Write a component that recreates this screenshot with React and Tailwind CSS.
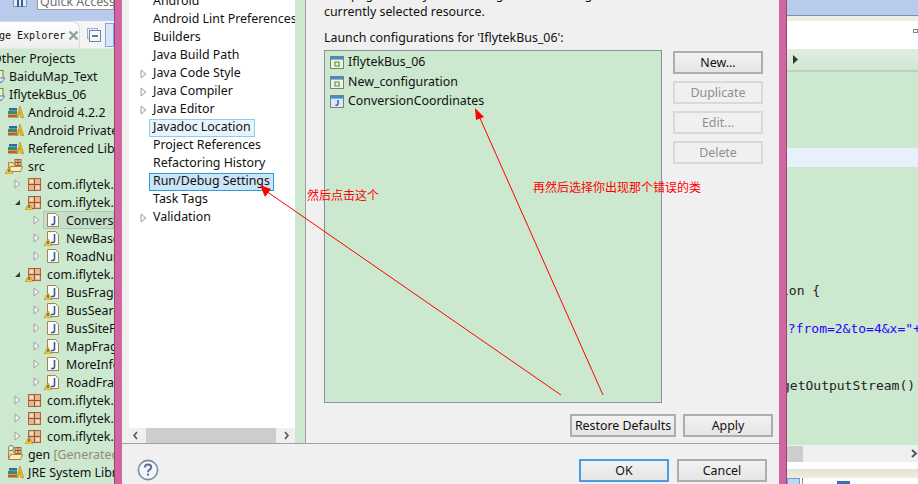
const ui = { fontFamily: '"Noto Sans", sans-serif' };

function Twisty({ open }) {
  if (open) {
    return (
      <svg width="7" height="7" viewBox="0 0 7 7" className="shrink-0">
        <path d="M6 1V6H1Z" fill="#3a3a3a" />
      </svg>
    );
  }
  return (
    <svg width="7" height="10" viewBox="0 0 7 10" className="shrink-0">
      <path d="M1 1L6 5L1 9Z" fill="#f4f4f4" stroke="#a0a0a0" />
    </svg>
  );
}

function Warn() {
  return (
    <svg width="8" height="7" viewBox="0 0 8 7" className="absolute left-[-3px] bottom-[-1px]">
      <path d="M4 0L8 7H0Z" fill="#f5c842" stroke="#a87b18" strokeWidth="0.6" />
      <path d="M4 2V5" stroke="#333" />
    </svg>
  );
}

function JavaIcon({ warn }) {
  return (
    <span className="relative w-[12px] h-[14px] shrink-0 block">
      <svg width="12" height="14" viewBox="0 0 12 14">
        <path d="M.5.5H8.5L11.5 3.5V13.5H.5Z" fill="#fdfcf6" stroke="#a5834f" />
        <path d="M7.5 3V10Q7.5 11.5 5.5 11.5H4" fill="none" stroke="#2f5fa8" strokeWidth="1.6" />
      </svg>
      {warn && <Warn />}
    </span>
  );
}

function PackageIcon({ warn }) {
  return (
    <span className="relative w-[13px] h-[13px] shrink-0 block">
      <svg width="13" height="13" viewBox="0 0 13 13">
        <rect x=".5" y=".5" width="12" height="12" fill="#e8b78f" stroke="#a8683c" />
        <path d="M6.5 0V13M0 6.5H13" stroke="#96562c" />
        <path d="M2 2H5V5H2ZM8 8H11V11H8Z" fill="#f6dcc4" />
      </svg>
      {warn && <Warn />}
    </span>
  );
}

function LibIcon() {
  return (
    <svg width="16" height="12" viewBox="0 0 16 12" className="shrink-0">
      <rect x="0" y="8.5" width="9" height="3" fill="#b5612c" />
      <rect x="0" y="5" width="9" height="3" fill="#3f8c5a" />
      <rect x="1" y="2" width="8" height="2.6" fill="#2f6aa8" />
      <path d="M12 0L16 12H13L11.5 6L10 12H8.5Z" fill="#f0b429" stroke="#b17e14" strokeWidth=".5" />
    </svg>
  );
}

function FolderIcon({ gen }) {
  return (
    <span className="relative w-[15px] h-[14px] shrink-0 block">
      <svg width="15" height="14" viewBox="0 0 15 14">
        <path d="M.5 3.5H5L6 5H12.5V12.5H.5Z" fill="#f6d98f" stroke="#a5834f" />
        <path d="M2.5 7.5H14.5L12.5 12.5H.5Z" fill="#fbeabc" stroke="#a5834f" />
        <rect x="7" y="0.5" width="6" height="6" fill="#e8b78f" stroke="#a8683c" />
        <path d="M10 .5V6.5M7 3.5H13" stroke="#96562c" />
      </svg>
      {!gen && <Warn />}
      {gen && <span className="absolute left-0 top-[-2px] w-[6px] h-[6px] rounded-full bg-white border border-[#5a8a3a]" />}
    </span>
  );
}

function ProjectIcon() {
  return (
    <svg width="6" height="14" viewBox="0 0 6 14" className="shrink-0">
      <rect x="-6" y=".5" width="9" height="8" fill="#e6edd0" stroke="#6f8a3a" />
      <path d="M-2 8H5L1 13Z" fill="#dfe8f6" stroke="#5f7fb0" />
    </svg>
  );
}

function LaunchIcon({ java }) {
  return (
    <svg width="14" height="13" viewBox="0 0 14 13" className="shrink-0">
      <rect x=".5" y=".5" width="13" height="12" fill={java ? "#dfe8f8" : "#eef4e4"} stroke="#7d7d7d" />
      <rect x="1" y="1" width="12" height="2.6" fill="#3d8fd0" />
      {java ? (
        <path d="M8 5V9Q8 10.2 6.4 10.2H5.5" fill="none" stroke="#2f5fa8" strokeWidth="1.5" />
      ) : (
        <path d="M5 6H9V10H5ZM9 10H10" fill="none" stroke="#4f9a3a" strokeWidth="1.1" />
      )}
    </svg>
  );
}

function ExplorerRow({ pl, twisty, open, icon, children, selected }) {
  return (
    <div className={`h-[18px] flex items-center whitespace-nowrap text-[12.4px] text-[#111] ${selected ? "relative" : ""}`} style={{ paddingLeft: pl }}>
      {selected && <div className="absolute left-[43px] right-0 top-0 bottom-0 bg-[#c5dfca] border border-[#aac8ae]" />}
      {twisty !== undefined && <span className="relative w-[14px] flex shrink-0 justify-start"><Twisty open={open} /></span>}
      {icon && <span className="relative w-[19px] flex shrink-0">{icon}</span>}
      <span className="relative flex items-center pt-[2px]">{children}</span>
    </div>
  );
}

function LeftPanel() {
  return (
    <div className="w-[114px] shrink-0 flex flex-col overflow-hidden bg-[#cce8cf]">
      {/* toolbar */}
      <div className="h-[21px] bg-[#b9cbec] relative overflow-hidden shrink-0">
        <div className="absolute left-[13px] top-[-7px] w-[14px] h-[14px] bg-[#e6ecf6] border border-[#8a97ad] flex justify-center gap-[2px] pt-[3px]">
          <span className="w-[2px] h-[10px] bg-[#3c5f96]" />
          <span className="w-[2px] h-[10px] bg-[#3c5f96]" />
        </div>
        <div className="absolute left-[37px] right-0 top-[-8px] h-[18px] bg-white border border-[#9a9a9a] pl-[2px] text-[12.4px] leading-[18px] text-[#6f6f6f] whitespace-nowrap overflow-hidden">
          Quick Access
        </div>
      </div>
      {/* view tabs */}
      <div className="h-[28px] shrink-0 flex bg-[#f4f4f4] border-b border-[#e4e8e4]">
        <div className="w-[85px] flex items-center rounded-tr-[8px] bg-gradient-to-b from-white to-[#eeeeee] border-t border-r border-[#dcdcdc] overflow-hidden">
          <span className="text-[10px] text-[#111] whitespace-nowrap ml-[-1px] w-[69px] shrink-0" style={{ fontFamily: '"DejaVu Sans Mono", monospace' }}>ge Explorer</span>
          <svg width="11" height="11" viewBox="0 0 11 11" className="shrink-0">
            <path d="M1.5 1.5L9.5 9.5M9.5 1.5L1.5 9.5" stroke="#8fa58f" strokeWidth="2.4" />
          </svg>
        </div>
        <svg width="14" height="14" viewBox="0 0 14 14" className="ml-[7px] mt-[7px] shrink-0">
          <rect x=".5" y=".5" width="10" height="10" fill="#eef2f8" stroke="#9fb0c8" />
          <rect x="2.5" y="2.5" width="11" height="11" fill="#f8fafd" stroke="#6d86a8" />
          <path d="M5 8H11" stroke="#26456f" strokeWidth="1.4" />
        </svg>
        <div className="ml-[4px] mt-[2px] w-[10px] h-[24px] bg-[#d8e6f8] border border-[#7fa8dc]" />
      </div>
      {/* tree */}
      <div className="flex-1 overflow-hidden">
        <ExplorerRow pl={0}><span className="ml-[-8px]">Other Projects</span></ExplorerRow>
        <ExplorerRow pl={0}><ProjectIcon /><span className="ml-[3px]">BaiduMap_Text</span></ExplorerRow>
        <ExplorerRow pl={0}><ProjectIcon /><span className="ml-[3px]">IflytekBus_06</span></ExplorerRow>
        <ExplorerRow pl={8} icon={<LibIcon />}><span className="ml-[1px]">Android 4.2.2</span></ExplorerRow>
        <ExplorerRow pl={8} icon={<LibIcon />}><span className="ml-[1px]">Android Private Libraries</span></ExplorerRow>
        <ExplorerRow pl={8} icon={<LibIcon />}><span className="ml-[1px]">Referenced Libraries</span></ExplorerRow>
        <ExplorerRow pl={8} icon={<FolderIcon />}><span className="ml-[1px]">src</span></ExplorerRow>
        <ExplorerRow pl={14} twisty={1} icon={<PackageIcon />}>com.iflytek.iflytekbus</ExplorerRow>
        <ExplorerRow pl={14} twisty={1} open icon={<PackageIcon warn />}>com.iflytek.iflytekbus</ExplorerRow>
        <ExplorerRow pl={33} twisty={1} selected icon={<JavaIcon />}>ConversionCoordinates</ExplorerRow>
        <ExplorerRow pl={33} twisty={1} icon={<JavaIcon warn />}>NewBaseActivity</ExplorerRow>
        <ExplorerRow pl={33} twisty={1} icon={<JavaIcon />}>RoadNumber</ExplorerRow>
        <ExplorerRow pl={14} twisty={1} open icon={<PackageIcon warn />}>com.iflytek.iflytekbus</ExplorerRow>
        <ExplorerRow pl={33} twisty={1} icon={<JavaIcon warn />}>BusFragment</ExplorerRow>
        <ExplorerRow pl={33} twisty={1} icon={<JavaIcon warn />}>BusSearchFragment</ExplorerRow>
        <ExplorerRow pl={33} twisty={1} icon={<JavaIcon />}>BusSiteFragment</ExplorerRow>
        <ExplorerRow pl={33} twisty={1} icon={<JavaIcon warn />}>MapFragment</ExplorerRow>
        <ExplorerRow pl={33} twisty={1} icon={<JavaIcon />}>MoreInfoFragment</ExplorerRow>
        <ExplorerRow pl={33} twisty={1} icon={<JavaIcon warn />}>RoadFragment</ExplorerRow>
        <ExplorerRow pl={14} twisty={1} icon={<PackageIcon />}>com.iflytek.iflytekbus</ExplorerRow>
        <ExplorerRow pl={14} twisty={1} icon={<PackageIcon />}>com.iflytek.iflytekbus</ExplorerRow>
        <ExplorerRow pl={14} twisty={1} icon={<PackageIcon warn />}>com.iflytek.iflytekbus</ExplorerRow>
        <ExplorerRow pl={8} icon={<FolderIcon gen />}><span className="ml-[1px]">gen <span className="text-[#958a6e]">[Generated Java Files]</span></span></ExplorerRow>
        <ExplorerRow pl={8} icon={<LibIcon />}><span className="ml-[1px]">JRE System Library</span></ExplorerRow>
      </div>
    </div>
  );
}

const prefs = [
  { label: "Android" },
  { label: "Android Lint Preferences" },
  { label: "Builders" },
  { label: "Java Build Path" },
  { label: "Java Code Style", more: true },
  { label: "Java Compiler", more: true },
  { label: "Java Editor", more: true },
  { label: "Javadoc Location", hover: true },
  { label: "Project References" },
  { label: "Refactoring History" },
  { label: "Run/Debug Settings", active: true },
  { label: "Task Tags" },
  { label: "Validation", more: true },
];

function PrefTree() {
  return (
    <div className="w-[166px] ml-[7px] bg-white flex flex-col overflow-hidden">
      <div className="flex-1 overflow-hidden -mt-[7px]">
        {prefs.map((p) => (
          <div key={p.label} className="h-[18px] flex items-center pl-[11px] whitespace-nowrap text-[12.4px] text-[#111]">
            <span className="w-[9px] shrink-0 flex">{p.more && <Twisty />}</span>
            <span
              className={`h-[18px] flex items-center pl-[3px] pr-[3px] pb-[2px] border ${
                p.active
                  ? "bg-[#cce4f7] border-[#26a0da]"
                  : p.hover
                  ? "bg-[#e8f4fb] border-[#8ccdf0]"
                  : "border-transparent"
              }`}
            >
              {p.label}
            </span>
          </div>
        ))}
      </div>
      <div className="h-[15px] shrink-0 bg-[#f0f0f0] flex items-center">
        <svg width="17" height="15" viewBox="0 0 17 15" className="shrink-0">
          <path d="M8 4L5 7.5L8 11" fill="none" stroke="#555" strokeWidth="1.6" />
        </svg>
        <div className="w-[130px] h-[15px] bg-[#cdcdcd] shrink-0" />
        <svg width="19" height="15" viewBox="0 0 19 15" className="shrink-0">
          <path d="M9 4L12 7.5L9 11" fill="none" stroke="#555" strokeWidth="1.6" />
        </svg>
      </div>
    </div>
  );
}

function Btn({ children, disabled, primary, className = "" }) {
  return (
    <div
      className={`h-[23px] flex items-center justify-center pt-[2px] text-[12.4px] border-2 ${
        disabled
          ? "text-[#8f8f8f] border-[#d9d9d9] bg-[#f0f0f0]"
          : primary
          ? "text-[#111] border-[#4a9be0] bg-gradient-to-b from-[#f2f2f2] to-[#e5e5e5]"
          : "text-[#111] border-[#adadad] bg-gradient-to-b from-[#f2f2f2] to-[#e5e5e5]"
      } ${className}`}
    >
      {children}
    </div>
  );
}

function Dialog() {
  return (
    <div className="w-[657px] shrink-0 flex flex-col bg-[#f0f0f0]">
      <div className="h-[443px] shrink-0 flex overflow-hidden">
        <PrefTree />
        <div className="w-[10px] shrink-0 bg-[#cce8cf]" />
        <div className="w-[474px] shrink-0 border-l border-[#a0a0a0] pl-[18px] overflow-hidden">
          <div className="-mt-[14px] text-[12.4px] leading-[17px] text-[#111] whitespace-nowrap">
            This page allows you to manage launch configurations associated with the
            <br />
            currently selected resource.
          </div>
          <div className="mt-[9px] text-[12.4px] leading-[17px] text-[#111]">Launch configurations for 'IflytekBus_06':</div>
          <div className="mt-[4px] flex">
            <div className="w-[338px] h-[353px] bg-[#cce8cf] border border-[#8a9199] pt-[2px] pl-[5px] shrink-0 text-[12.4px] text-[#111]">
              <div className="h-[19px] flex items-center gap-[4px]"><LaunchIcon />IflytekBus_06</div>
              <div className="h-[20px] flex items-center gap-[4px]"><LaunchIcon />New_configuration</div>
              <div className="h-[19px] flex items-center gap-[4px]"><LaunchIcon java />ConversionCoordinates</div>
            </div>
            <div className="ml-[11px] w-[90px] shrink-0 flex flex-col gap-[7px] pt-[1px]">
              <Btn>New...</Btn>
              <Btn disabled>Duplicate</Btn>
              <Btn disabled>Edit...</Btn>
              <Btn disabled>Delete</Btn>
            </div>
          </div>
          <div className="mt-[11px] flex justify-end gap-[7px] pr-[6px]">
            <Btn className="w-[106px]">Restore Defaults</Btn>
            <Btn className="w-[90px]">Apply</Btn>
          </div>
        </div>
      </div>
      <div className="h-[1px] shrink-0 bg-[#a0a0a0]" />
      <div className="flex-1 flex items-start pt-[15px] pl-[15px] pr-[12px]">
        <svg width="22" height="22" viewBox="0 0 22 22" className="shrink-0">
          <circle cx="11" cy="11" r="9.6" fill="#f4f6fa" stroke="#7c8ba3" strokeWidth="1.6" />
          <path d="M7.8 8.5Q8 5.5 11 5.5Q14.2 5.5 14.2 8.2Q14.2 9.8 12.3 10.8Q11 11.5 11 13.2" fill="none" stroke="#5c6f8e" strokeWidth="2" />
          <rect x="10" y="14.6" width="2" height="2" fill="#5c6f8e" />
        </svg>
        <div className="ml-auto flex gap-[8px]">
          <Btn primary className="w-[90px]">OK</Btn>
          <Btn className="w-[90px]">Cancel</Btn>
        </div>
      </div>
    </div>
  );
}

function RightPanel() {
  const mono = { fontFamily: '"DejaVu Sans Mono", monospace' };
  return (
    <div className="flex-1 flex flex-col overflow-hidden bg-[#cce8cf]">
      <div className="h-[15px] shrink-0 bg-[#b9cbec]" />
      <div className="h-[1px] shrink-0 bg-[#7f8ea8]" />
      <div className="h-[5px] shrink-0 bg-[#f0ecdf]" />
      <div className="h-[28px] shrink-0 bg-white flex justify-end pt-[8px]">
        <div className="w-[5px] h-[4px] border border-[#7a8a8a]" />
      </div>
      <div className="h-[21px] shrink-0 bg-gradient-to-b from-[#e2ece2] to-[#cfe8d2] flex items-center pl-[6px]">
        <svg width="5" height="9" viewBox="0 0 5 9"><path d="M0 0L5 4.5L0 9Z" fill="#2e3a30" /></svg>
      </div>
      <div className="h-[2px] shrink-0 bg-[#c6c9c6]" />
      <div className="h-[76px] shrink-0" />
      <div className="h-[19px] shrink-0 bg-[#e8f0fc]" />
      <div className="h-[278px] shrink-0 overflow-hidden pt-[114px] text-[13px] leading-[19px] whitespace-pre text-[#222]" style={mono}>
        <div className="-ml-[6px]">ion {"{"}</div>
        <div className="h-[19px]" />
        <div className="-ml-[7px] text-[#2a00ff]">t?from=2&amp;to=4&amp;x="+</div>
        <div className="h-[19px]" />
        <div className="h-[19px]" />
        <div className="-ml-[5px]">getOutputStream()</div>
      </div>
      <div className="h-[17px] shrink-0 bg-[#f0f0f0] flex items-center justify-between">
        <div className="w-[16px] h-[16px] bg-[#cdcdcd]" />
        <svg width="7" height="9" viewBox="0 0 7 9"><path d="M1 1L5 4.5L1 8" fill="none" stroke="#555" strokeWidth="2" /></svg>
      </div>
      <div className="h-[7px] shrink-0 bg-white" />
      <div className="h-[9px] shrink-0 bg-gradient-to-b from-[#e6e3d6] to-[#f0ecdf]" />
      <div className="flex-1 bg-white flex items-start">
        <div className="w-[13px] h-[7px] bg-[#bcd8f4] border border-[#6f9fd8]" />
        <div className="ml-[2px] w-[1px] h-[7px] bg-[#8a8a8a]" />
        <div className="ml-[34px] mt-[3px] w-[13px] h-[3px] bg-[#3c6fb4]" />
      </div>
    </div>
  );
}

export default function App() {
  return (
    <div className="relative w-[918px] h-[484px] flex overflow-hidden" style={ui}>
      <LeftPanel />
      <div className="w-[8px] shrink-0 bg-[#d2659f] border-l border-[#8f4a70]" />
      <Dialog />
      <div className="w-[8px] shrink-0 bg-[#d2659f] border-r border-[#8f4a70]" />
      <RightPanel />

      {/* red notes drawn over the screenshot */}
      <svg width="918" height="484" viewBox="0 0 918 484" className="absolute left-0 top-0 pointer-events-none">
        <path d="M561 395L266 191" stroke="#ff0000" fill="none" />
        <path d="M260 185L271 189L265 197Z" fill="#ff0000" />
        <path d="M603 395L479 116" stroke="#ff0000" fill="none" />
        <path d="M475 108L484 117L476 120Z" fill="#ff0000" />
      </svg>
      <div className="absolute left-[307px] top-[187px] text-[12px] leading-[16px] text-[#ff0000] whitespace-nowrap" style={{ fontFamily: '"Noto Sans CJK SC", sans-serif' }}>然后点击这个</div>
      <div className="absolute left-[533px] top-[179px] text-[12px] leading-[16px] text-[#ff0000] whitespace-nowrap" style={{ fontFamily: '"Noto Sans CJK SC", sans-serif' }}>再然后选择你出现那个错误的类</div>
    </div>
  );
}
